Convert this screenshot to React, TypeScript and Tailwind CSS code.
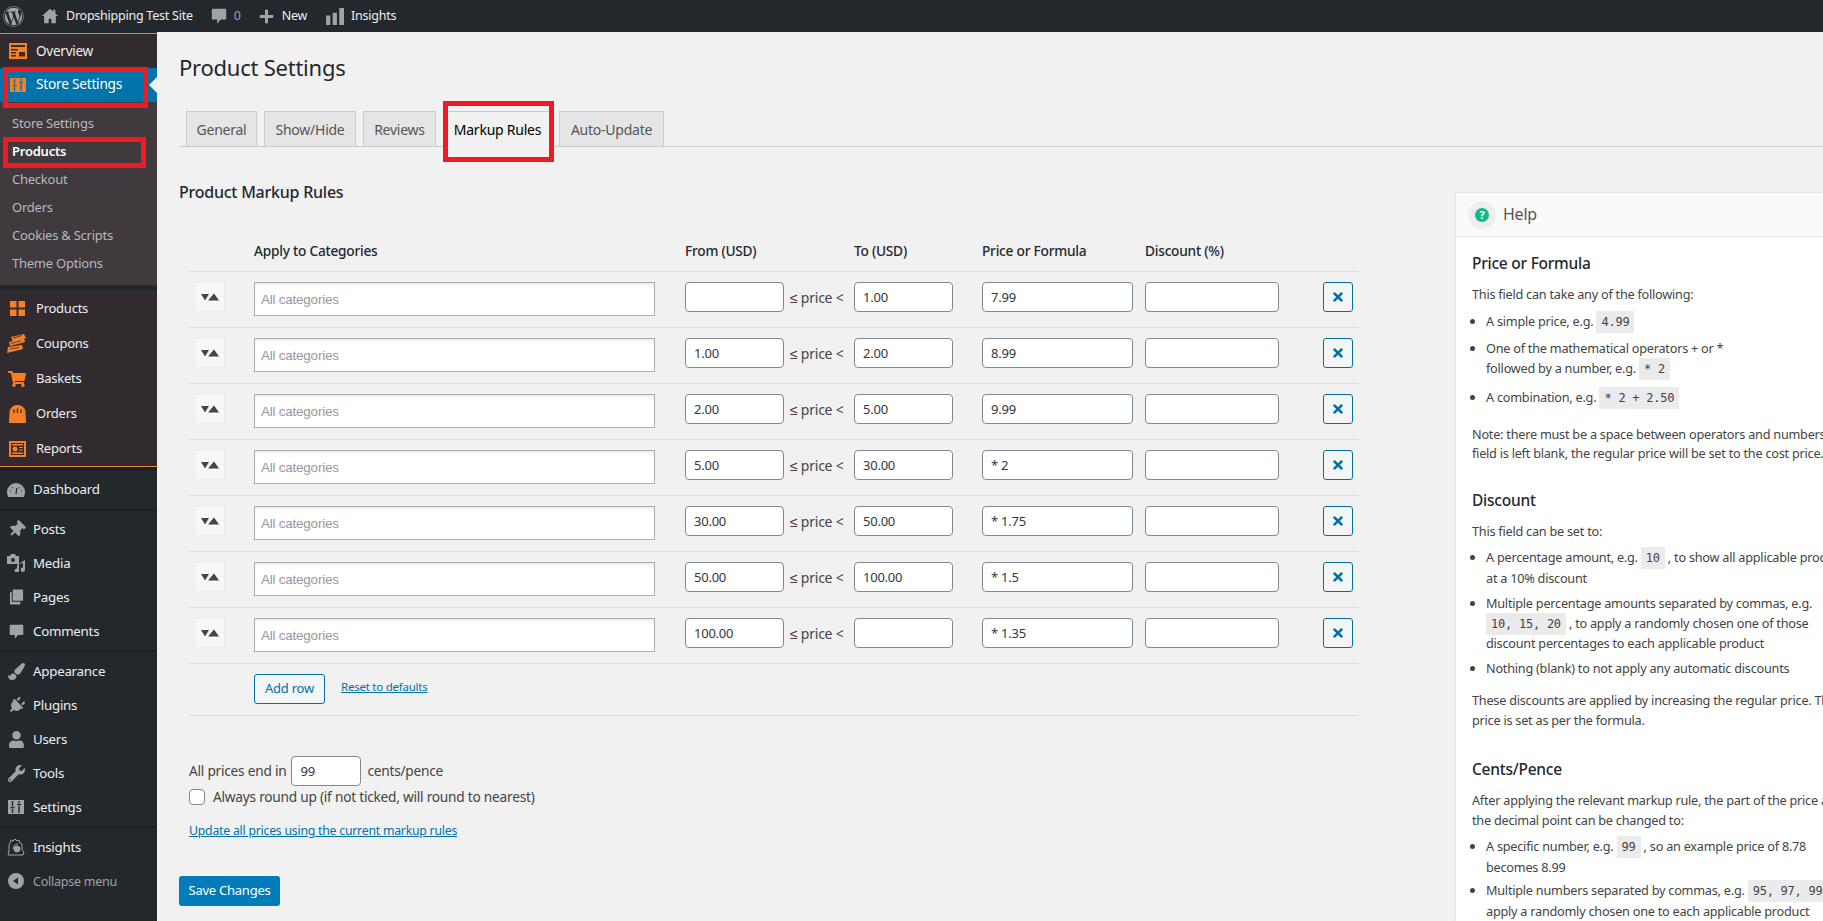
import React from "react";
import { FaWordpress, FaThumbtack, FaPlug, FaUser, FaWrench, FaPaintBrush, FaTimes, FaShoppingCart } from "react-icons/fa";

const font = "[font-family:'Noto_Sans',sans-serif]";

const HomeIcon = () => (
  <svg viewBox="0 0 20 20" className="w-[18px] h-[18px]" fill="#9ea3a8"><path d="M10 2 1 10h2.500v8h5v-5h3v5h5v-8H19l-3-2.700V3h-2.500v2.100z" /></svg>
);
const Bubble = ({ c = "#9ea3a8", s = 18 }: { c?: string; s?: number }) => (
  <svg viewBox="0 0 20 20" width={s} height={s} fill={c}><path d="M3 2h14a1 1 0 0 1 1 1v10a1 1 0 0 1-1 1h-5l-4 4.500V14H3a1 1 0 0 1-1-1V3a1 1 0 0 1 1-1z" /></svg>
);
const PlusIcon = () => (
  <svg viewBox="0 0 20 20" className="w-[15px] h-[15px]" fill="#9ea3a8"><path d="M8 1h4v7h7v4h-7v7H8v-7H1V8h7z" /></svg>
);
const BarsIcon = () => (
  <svg viewBox="0 0 20 18" className="w-[19px] h-[17px]" fill="#9ea3a8"><path d="M0 8h4.500v10H0zM7 5h4.500v13H7zM14 0h5v18h-5z" /></svg>
);
const Overview = () => (
  <svg viewBox="0 0 18 16" className="w-[18px] h-[16px]"><rect width="18" height="16" fill="#f58025" /><path d="M2 2h14v2H2zM2 6h7v1.500H2zM2 9h5v1.500H2zM2 12h5v1.500H2zM10 9h6v4.500h-6z" fill="#312b2f" /></svg>
);
const Sliders = ({ bg, fg }: { bg: string; fg: string }) => (
  <svg viewBox="0 0 16 14" className="w-[16px] h-[14px]"><rect width="16" height="14" fill={bg} /><path d="M4.500 1v5M4.500 9v4M11 1v2M11 6v7M2.500 7.500h4M9 4.500h4" stroke={fg} strokeWidth="1.400" /></svg>
);
const Grid4 = () => (
  <svg viewBox="0 0 15 15" className="w-[15px] h-[15px]" fill="#f58025"><path d="M0 0h6.500v6.500H0zM8.500 0H15v6.500H8.500zM0 8.500h6.500V15H0zM8.500 8.500H15V15H8.500z" /></svg>
);
const Tickets = () => (
  <svg viewBox="0 0 20 19" className="w-[20px] h-[19px]" fill="#f58025"><path d="M4 3 17 0l2 4-13 4zM2 8l15-4 1 4L3 12zM1 13l14-2 1 4-16 4z" /><path d="M6 4l9-2.500M4 9.500l10-2.800M3 15l9-1.600" stroke="#312b2f" strokeWidth="0.800" /></svg>
);
const Bag = () => (
  <svg viewBox="0 0 17 18" className="w-[17px] h-[18px]" fill="#f58025"><path d="M0 18 .5 7C1 3 4 0 8.500 0S16 3 16.500 7l.5 11z" /><path d="M5 8V4.500M8.500 8V3.500M12 8V4.500" stroke="#312b2f" strokeWidth="1.300" /></svg>
);
const Report = () => (
  <svg viewBox="0 0 17 16" className="w-[17px] h-[16px]"><rect width="17" height="16" fill="#f58025" /><rect x="2" y="2" width="13" height="12" fill="#312b2f" /><path d="M3 3h11v1.500H3zM10 6h4v1H10zM10 8.500h4v1H10zM3 11.500h11v1.500H3z" fill="#f58025" /><circle cx="6" cy="8" r="2.500" fill="#f58025" /></svg>
);
const Gauge = () => (
  <svg viewBox="0 0 18 14" className="w-[18px] h-[14px]" fill="#9ea3a8"><path d="M0 9a9 9 0 0 1 18 0c0 2-.5 3.500-1.200 5H1.200C.5 12.500 0 11 0 9z" /><path d="m9 11 .8-6M3 8h1M5 4.500l.7.700M14 8h1M12.500 4.500l-.7.700" stroke="#23282d" strokeWidth="1.200" /></svg>
);
const MediaIcon = () => (
  <svg viewBox="0 0 20 18" className="w-[20px] h-[18px]" fill="#9ea3a8"><path d="M1 2h3l1-2h4l1 2h3v8H1z" /><circle cx="7" cy="6" r="2" fill="#23282d" /><path d="M19 6v9.500a2.200 2.200 0 1 1-2-2V9l-4 1v6.500a2.200 2.200 0 1 1-2-2V11z" /></svg>
);
const PagesIcon = () => (
  <svg viewBox="0 0 16 16" className="w-[15px] h-[16px]" fill="#9ea3a8"><path d="M4 0h11v12H4z" /><path d="M1 3h2v10h9v3H1z" /></svg>
);
const InsightsIcon = () => (
  <svg viewBox="0 0 18 18" className="w-[18px] h-[18px]" fill="none" stroke="#9ea3a8" strokeWidth="1"><path d="M1 17h15l1-3-2-2V6l-2-1-1-3-2 1-2-2-2 2-2-1-1 3-1 2v6z" /><circle cx="10" cy="11" r="3" fill="#9ea3a8" /><path d="M6 11a5 5 0 0 1 5-5" /></svg>
);
const Collapse = () => (
  <svg viewBox="0 0 16 16" className="w-[16px] h-[16px]"><circle cx="8" cy="8" r="8" fill="#9ea3a8" /><path d="M10 4.500v7L5 8z" fill="#23282d" /></svg>
);

const Sep = ({ h }: { h: string }) => (
  <div className={`${h} flex items-center`}><div className="h-[2px] w-full bg-[#1c2024]" /></div>
);

const OrangeRow = ({ icon, label }: { icon: React.ReactNode; label: string }) => (
  <div className="h-[35px] flex items-center text-[13px] text-[#eeeeee]">
    <div className="w-[36px] flex justify-center pl-[2px] pr-[4px]">{icon}</div>
    <span>{label}</span>
  </div>
);

const GrayRow = ({ icon, label, muted }: { icon: React.ReactNode; label: string; muted?: boolean }) => (
  <div className={`h-[34px] flex items-center ${muted ? "text-[#9ea3a8] text-[12.500px]" : "text-[#eeeeee] text-[13.300px]"}`}>
    <div className="w-[33px] flex justify-center pl-[1px] pr-[2px] text-[#9ea3a8] text-[17px]">{icon}</div>
    <span className="pt-[2px]">{label}</span>
  </div>
);

function Sidebar() {
  return (
    <aside className="w-[157px] shrink-0 bg-[#23282d] relative pt-px">
      <div className="bg-[#312b2f] border-t border-[#e5852f]">
        <div className="h-[34px] flex items-center text-[13.500px] text-[#eeeeee]">
          <div className="w-[36px] flex justify-center pl-[1px] pr-[1px]"><Overview /></div>
          <span>Overview</span>
        </div>
        <div className="h-[34px] bg-[#0073aa] flex items-center text-[13.700px] text-white relative">
          <div className="w-[36px] flex justify-center"><Sliders bg="#f58025" fg="#0073aa" /></div>
          <span className="pb-[1px]">Store Settings</span>
          <div className="absolute right-0 top-[9px] w-0 h-0 border-y-[8px] border-y-transparent border-r-[8px] border-r-[#f1f1f1]" />
        </div>
        <div className="bg-[#403a3e] pt-[8px] text-[13px] text-[#b4b9be] h-[183px]">
          {["Store Settings", "Products", "Checkout", "Orders", "Cookies & Scripts", "Theme Options"].map((t) => (
            <div key={t} className={`h-[28px] flex items-center pl-[12px] ${t === "Products" ? "font-semibold text-white" : ""}`}>{t}</div>
          ))}
        </div>
        <div className="h-[6px] bg-[#23282d]" />
        <OrangeRow icon={<Grid4 />} label="Products" />
        <OrangeRow icon={<Tickets />} label="Coupons" />
        <OrangeRow icon={<FaShoppingCart className="text-[#f58025] text-[18px]" />} label="Baskets" />
        <OrangeRow icon={<Bag />} label="Orders" />
        <OrangeRow icon={<Report />} label="Reports" />
      </div>
      <div className="h-[5px] border-t border-[#e5852f] bg-[#1c2024]" />
      <div className="h-[37px] flex items-center text-[13.300px] text-[#eeeeee]">
        <div className="w-[33px] flex justify-center pl-[1px] pr-[2px]"><Gauge /></div>
        <span>Dashboard</span>
      </div>
      <Sep h="h-[4px]" />
      <GrayRow icon={<FaThumbtack className="rotate-45" />} label="Posts" />
      <GrayRow icon={<MediaIcon />} label="Media" />
      <GrayRow icon={<PagesIcon />} label="Pages" />
      <GrayRow icon={<Bubble s={17} />} label="Comments" />
      <Sep h="h-[6px]" />
      <GrayRow icon={<FaPaintBrush />} label="Appearance" />
      <GrayRow icon={<FaPlug className="rotate-45" />} label="Plugins" />
      <GrayRow icon={<FaUser />} label="Users" />
      <GrayRow icon={<FaWrench />} label="Tools" />
      <GrayRow icon={<Sliders bg="#9ea3a8" fg="#23282d" />} label="Settings" />
      <Sep h="h-[6px]" />
      <GrayRow icon={<InsightsIcon />} label="Insights" />
      <GrayRow icon={<Collapse />} label="Collapse menu" muted />
      <div className="absolute left-[3px] top-[35px] w-[145px] h-[41px] border-[5px] border-[#ed1c24]" />
      <div className="absolute left-[3px] top-[105px] w-[143px] h-[31px] border-[5px] border-[#ed1c24]" />
    </aside>
  );
}

const Tab = ({ label, w, active }: { label: string; w: string; active?: boolean }) => (
  <div className={`${w} h-[36px] flex items-center justify-center text-[14px] border border-[#cccccc] ${active ? "bg-[#f1f1f1] border-b-[#f1f1f1] text-black" : "bg-[#e5e5e5] text-[#555555]"}`}>{label}</div>
);

const inputCls = "h-[30px] rounded-[4px] border border-[#7e8993] bg-white px-[8px] text-[13px] text-[#32373c] outline-none";

const rows = [
  ["", "1.00", "7.99"],
  ["1.00", "2.00", "8.99"],
  ["2.00", "5.00", "9.99"],
  ["5.00", "30.00", "* 2"],
  ["30.00", "50.00", "* 1.75"],
  ["50.00", "100.00", "* 1.5"],
  ["100.00", "", "* 1.35"],
];
const gridCols = "grid grid-cols-[65px_431px_169px_128px_163px_178px_36px]";

function Rule({ r }: { r: string[] }) {
  return (
    <div className={`${gridCols} h-[56px] pt-[10px] border-b border-[#dddddd] items-start`}>
      <div className="pl-[6px]">
        <div className="w-[30px] h-[29px] bg-[#f7f7f7] border border-[#eeeeee] flex items-center justify-center">
          <svg viewBox="0 0 18 8" className="w-[18px] h-[8px]" fill="#444"><path d="M0 1h8L4 7.500zM7 7.500 13 .5l5 7z" /></svg>
        </div>
      </div>
      <input readOnly placeholder="All categories" className="w-[401px] h-[34px] border border-[#aaaaaa] bg-white px-[6px] shadow-[inset_0_4px_3px_-2px_#eeeeee] text-[13.500px] [font-family:'Liberation_Sans',sans-serif] placeholder:text-[#999999] outline-none" />
      <div className="flex items-center">
        <input readOnly defaultValue={r[0]} className={`${inputCls} w-[99px]`} />
        <span className="ml-[6px] text-[14px] text-[#444444] whitespace-nowrap">≤ price &lt;</span>
      </div>
      <input readOnly defaultValue={r[1]} className={`${inputCls} w-[99px]`} />
      <input readOnly defaultValue={r[2]} className={`${inputCls} w-[151px]`} />
      <input readOnly defaultValue="" className={`${inputCls} w-[134px]`} />
      <div className="w-[30px] h-[30px] rounded-[3px] border border-[#0071a1] bg-[#f3f5f6] flex items-center justify-center text-[#0071a1] text-[14px]"><FaTimes /></div>
    </div>
  );
}

const Code = ({ children }: { children: React.ReactNode }) => (
  <code className="bg-[#ebebeb] px-[5px] py-[4px] text-[12px] [font-family:'DejaVu_Sans_Mono',monospace] text-[#444444]">{children}</code>
);

const H3 = ({ children, mt }: { children: React.ReactNode; mt: string }) => (
  <h3 className={`${mt} text-[15.500px] leading-[20px] font-medium text-[#23282d]`}>{children}</h3>
);

function Help() {
  return (
    <div className="w-[560px] shrink-0 bg-white border border-[#e5e5e5] mt-[45px] text-[12.700px] leading-[19.500px] text-[#444444] whitespace-nowrap pb-[40px]">
      <div className="h-[44px] bg-[#fafafa] border-b border-[#e5e5e5] flex items-center pl-[12px]">
        <div className="w-[28px] h-[28px] rounded-full bg-[#eeeeee] flex items-center justify-center">
          <div className="w-[14px] h-[14px] rounded-full bg-[#13b98a] text-white text-[11px] font-bold leading-[14px] text-center">?</div>
        </div>
        <span className="ml-[7px] text-[16px] text-[#555555]">Help</span>
      </div>
      <div className="pl-[16px]">
        <H3 mt="mt-[16px]">Price or Formula</H3>
        <p className="mt-[12px]">This field can take any of the following:</p>
        <ul className="list-disc pl-[14px] mt-[7px]">
          <li>A simple price, e.g. <Code>4.99</Code></li>
          <li className="mt-[7px]">One of the mathematical operators + or *<br />followed by a number, e.g. <Code>* 2</Code></li>
          <li className="mt-[9px]">A combination, e.g. <Code>* 2 + 2.50</Code></li>
        </ul>
        <p className="mt-[16px]">Note: there must be a space between operators and numbers. If this<br />field is left blank, the regular price will be set to the cost price.</p>
        <H3 mt="mt-[26px]">Discount</H3>
        <p className="mt-[12px]">This field can be set to:</p>
        <ul className="list-disc pl-[14px] mt-[7px]">
          <li>A percentage amount, e.g. <Code>10</Code> , to show all applicable products<br />at a 10% discount</li>
          <li className="mt-[6px]">Multiple percentage amounts separated by commas, e.g.<br /><Code>10, 15, 20</Code> , to apply a randomly chosen one of those<br />discount percentages to each applicable product</li>
          <li className="mt-[5px]">Nothing (blank) to not apply any automatic discounts</li>
        </ul>
        <p className="mt-[13px]">These discounts are applied by increasing the regular price. The sale<br />price is set as per the formula.</p>
        <H3 mt="mt-[29px]">Cents/Pence</H3>
        <p className="mt-[12px]">After applying the relevant markup rule, the part of the price after<br />the decimal point can be changed to:</p>
        <ul className="list-disc pl-[14px] mt-[7px]">
          <li>A specific number, e.g. <Code>99</Code> , so an example price of 8.78<br />becomes 8.99</li>
          <li className="mt-[4px]">Multiple numbers separated by commas, e.g. <Code>95, 97, 99</Code> to<br />apply a randomly chosen one to each applicable product</li>
        </ul>
      </div>
    </div>
  );
}

export default function App() {
  return (
    <div className={`h-[921px] w-[1823px] overflow-hidden bg-[#f1f1f1] flex flex-col tracking-[-0.015em] ${font}`}>
      <header className="h-[32px] shrink-0 bg-[#23282d] flex items-center text-[12.500px] text-[#eeeeee]">
        <FaWordpress className="ml-[3px] text-[21px] text-[#9ea3a8]" />
        <div className="ml-[17px]"><HomeIcon /></div>
        <span className="ml-[7px] pt-[1px]">Dropshipping Test Site</span>
        <div className="ml-[17px]"><Bubble /></div>
        <span className="ml-[6px] pt-[1px] text-[#9ea3a8]">0</span>
        <div className="ml-[18px]"><PlusIcon /></div>
        <span className="ml-[8px] pt-[1px]">New</span>
        <div className="ml-[19px]"><BarsIcon /></div>
        <span className="ml-[6px] pt-[1px]">Insights</span>
      </header>
      <div className="flex flex-1 min-h-0">
        <Sidebar />
        <main className="relative flex-1 min-w-0 overflow-hidden">
          <h1 className="ml-[22px] mt-[19px] text-[22px] leading-[32px] text-[#23282d]">Product Settings</h1>
          <nav className="ml-[22px] mt-[28px] h-[36px] pl-[7px] flex gap-[7px] border-b border-[#cccccc]">
            <Tab label="General" w="w-[71px]" />
            <Tab label="Show/Hide" w="w-[92px]" />
            <Tab label="Reviews" w="w-[73px]" />
            <Tab label="Markup Rules" w="w-[109px]" active />
            <Tab label="Auto-Update" w="w-[105px]" />
          </nav>
          <div className="flex">
            <section className="w-[1298px] shrink-0 pl-[22px]">
              <h2 className="mt-[34px] text-[16px] leading-[22px] font-medium text-[#23282d]">Product Markup Rules</h2>
              <div className="ml-[10px] w-[1170px] mt-[31px]">
                <div className={`${gridCols} h-[38px] pb-[3px] border-b border-[#dddddd] text-[13.700px] font-medium text-[#23282d] items-center`}>
                  <span />
                  <span>Apply to Categories</span>
                  <span>From (USD)</span>
                  <span>To (USD)</span>
                  <span>Price or Formula</span>
                  <span>Discount (%)</span>
                  <span />
                </div>
                {rows.map((r, i) => <Rule key={i} r={r} />)}
                <div className="h-[52px] border-b border-[#dddddd] pl-[65px] pt-[10px] flex items-start">
                  <div className="w-[71px] h-[30px] rounded-[3px] border border-[#0071a1] bg-[#f3f5f6] text-[#0071a1] text-[13px] flex items-center justify-center">Add row</div>
                  <a className="ml-[16px] mt-[4px] text-[11.500px] leading-[18px] text-[#0073aa] underline">Reset to defaults</a>
                </div>
                <div className="mt-[40px] flex items-center text-[13.700px] text-[#444444]">
                  <span>All prices end in</span>
                  <input readOnly defaultValue="99" className={`${inputCls} w-[70px] ml-[5px]`} />
                  <span className="ml-[6px]">cents/pence</span>
                </div>
                <label className="flex items-center text-[13.700px] leading-[21px] text-[#444444]">
                  <span className="w-[16px] h-[16px] rounded-[4px] border border-[#7e8993] bg-white" />
                  <span className="ml-[8px]">Always round up (if not ticked, will round to nearest)</span>
                </label>
                <a className="block mt-[15px] text-[12.300px] leading-[18px] text-[#0073aa] underline">Update all prices using the current markup rules</a>
              </div>
              <div className="mt-[36px] w-[101px] h-[30px] rounded-[3px] bg-[#007cba] text-white text-[13px] flex items-center justify-center">Save Changes</div>
            </section>
            <Help />
          </div>
          <div className="absolute left-[286px] top-[69px] w-[111px] h-[61px] border-[5px] border-[#ed1c24]" />
        </main>
      </div>
    </div>
  );
}
